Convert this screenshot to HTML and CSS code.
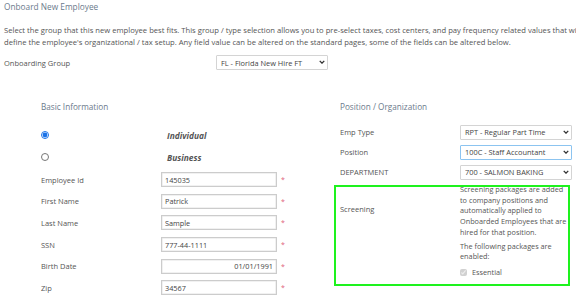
FILE: index.html
```html
<!DOCTYPE html>
<html lang="en">
  <head>
    <meta charset="UTF-8" />
    <title>Onboard New Employee</title>
    <link rel="stylesheet" href="styles.css">
  </head>
  <body>
    <div class="page-title">Onboard New Employee</div>
    <div class="intro">
      <div>Select the group that this new employee best fits. This group / type selection allows you to pre-select taxes, cost centers, and pay frequency related values that will</div>
      <div>define the employee's organizational / tax setup. Any field value can be altered on the standard pages, some of the fields can be altered below.</div>
    </div>
    <div class="group-row">
      <label class="group-label">Onboarding Group</label>
      <span class="sel-wrap">
        <select class="sel">
          <option>FL - Florida New Hire FT</option>
        </select>
        <svg class="chev" viewBox="0 0 8 5"><path d="M1 1 L4 4 L7 1" /></svg>
      </span>
    </div>

    <div class="columns">
      <!-- ===== basic info ===== -->
      <div class="col col-left">
        <div class="section-title">Basic Information</div>
        <div class="radio-row">
          <input type="radio" name="kind" checked>
          <span class="radio-text">Individual</span>
        </div>
        <div class="radio-row">
          <input type="radio" name="kind">
          <span class="radio-text">Business</span>
        </div>
        <div class="fields">
          <div class="field-row">
            <label>Employee Id</label>
            <input type="text" value="145035"><span class="req">*</span>
          </div>
          <div class="field-row">
            <label>First Name</label>
            <input type="text" value="Patrick"><span class="req">*</span>
          </div>
          <div class="field-row">
            <label>Last Name</label>
            <input type="text" value="Sample"><span class="req">*</span>
          </div>
          <div class="field-row">
            <label>SSN</label>
            <input type="text" value="777-44-1111"><span class="req">*</span>
          </div>
          <div class="field-row">
            <label>Birth Date</label>
            <input type="text" class="right" value="01/01/1991"><span class="req">*</span>
          </div>
          <div class="field-row">
            <label>Zip</label>
            <input type="text" value="34567"><span class="req">*</span>
          </div>
        </div>
      </div>

      <!-- ===== position ===== -->
      <div class="col col-right">
        <div class="section-title">Position / Organization</div>
        <div class="sel-rows">
          <div class="sel-row">
            <label>Emp Type</label>
            <span class="sel-wrap">
              <select class="sel"><option>RPT - Regular Part Time</option></select>
              <svg class="chev" viewBox="0 0 8 5"><path d="M1 1 L4 4 L7 1" /></svg>
            </span>
          </div>
          <div class="sel-row">
            <label>Position</label>
            <span class="sel-wrap">
              <select class="sel sel-active"><option>100C - Staff Accountant</option></select>
              <svg class="chev" viewBox="0 0 8 5"><path d="M1 1 L4 4 L7 1" /></svg>
            </span>
          </div>
          <div class="sel-row">
            <label>DEPARTMENT</label>
            <span class="sel-wrap">
              <select class="sel"><option>700 - SALMON BAKING</option></select>
              <svg class="chev" viewBox="0 0 8 5"><path d="M1 1 L4 4 L7 1" /></svg>
            </span>
          </div>
        </div>
        <div class="screening">
          <div class="screening-label">Screening</div>
          <div class="screening-body">
            <p>Screening packages are added to company positions and automatically applied to Onboarded Employees that are hired for that position.</p>
            <p>The following packages are enabled:</p>
            <div class="pkg">
              <input type="checkbox" checked disabled>
              <span>Essential</span>
            </div>
          </div>
        </div>
      </div>
    </div>
  </body>
</html>
```

FILE: styles.css
```css
html,
body {
  margin: 0;
  padding: 0;
  overflow: hidden;
  background: #fff;
}
body {
  font-family: "Open Sans", "Liberation Sans", sans-serif;
  font-size: 7.5px;
  color: #555;
  padding-left: 4px;
}
.page-title {
  margin-top: 1px;
  font-size: 8.3px;
  line-height: 12px;
  color: #6b7a8c;
}
.intro {
  margin-top: 11px;
  font-size: 7.65px;
  line-height: 12px;
  color: #555;
  white-space: nowrap;
}
.group-row {
  display: flex;
  align-items: center;
  height: 15px;
  margin-top: 7px;
}
.group-label {
  width: 212px;
}
.sel-wrap {
  position: relative;
  display: inline-block;
  height: 15px;
}
.sel {
  appearance: none;
  -webkit-appearance: none;
  width: 112px;
  height: 15px;
  font-family: inherit;
  font-size: 7.4px;
  color: #444;
  border: 1px solid #d4d4d4;
  border-radius: 1px;
  padding: 0 12px 0 4px;
  background: #fff;
  box-sizing: border-box;
  margin: 0;
  display: block;
}
.sel-active {
  border-color: #8cc4f0;
}
.chev {
  position: absolute;
  right: 3px;
  top: 5px;
  width: 6px;
  height: 4px;
  fill: none;
  stroke: #333;
  stroke-width: 1.8;
  pointer-events: none;
}
.columns {
  display: flex;
  margin-top: 31px;
}
.col-left {
  padding-left: 37px;
  width: 336px;
  box-sizing: border-box;
}
.col-right {
  width: 232px;
}
.section-title {
  font-size: 8.2px;
  line-height: 12px;
  color: #6b7a8c;
}
.col-left .section-title {
  margin-bottom: 11px;
}
.radio-row {
  display: flex;
  align-items: center;
  height: 22px;
}
.radio-row input {
  width: 8px;
  height: 8px;
  margin: 0;
  accent-color: #1a73e8;
}
.radio-text {
  margin-left: 118px;
  font-size: 8.4px;
  font-weight: 700;
  font-style: italic;
  color: #555;
}
.fields {
  margin-top: 1px;
}
.field-row,
.sel-row {
  display: flex;
  align-items: center;
}
.field-row {
  height: 21.6px;
}
.field-row label,
.sel-row label {
  width: 120px;
}
.field-row input {
  width: 116px;
  height: 15px;
  box-sizing: border-box;
  border: 1px solid #ccc;
  box-shadow: inset 0 0 0 0.5px #e4e4e4;
  padding: 0 3px;
  font-family: inherit;
  font-size: 7.3px;
  color: #444;
  margin: 0;
}
.field-row input.right {
  text-align: right;
}
.req {
  color: #e0607a;
  margin-left: 4px;
  font-size: 7px;
}
.sel-rows {
  margin-top: 9px;
}
.sel-row {
  height: 20px;
}
.screening {
  display: flex;
  margin-top: 2px;
  margin-left: -7px;
  padding: 0 0 9px 7px;
  width: 238px;
  box-sizing: border-box;
  outline: 2px solid #1ef21e;
  outline-offset: -3px;
}
.screening-label {
  width: 120px;
  margin-top: 20px;
  line-height: 10.7px;
}
.screening-body {
  width: 108px;
  font-size: 7.3px;
  line-height: 10.7px;
  color: #555;
}
.screening-body p {
  margin: 0 0 3px;
}
.pkg {
  display: flex;
  align-items: center;
  margin-top: 5.5px;
  height: 10.7px;
}
.pkg input {
  width: 7px;
  height: 7px;
  margin: 0 5px 0 0;
}
```
